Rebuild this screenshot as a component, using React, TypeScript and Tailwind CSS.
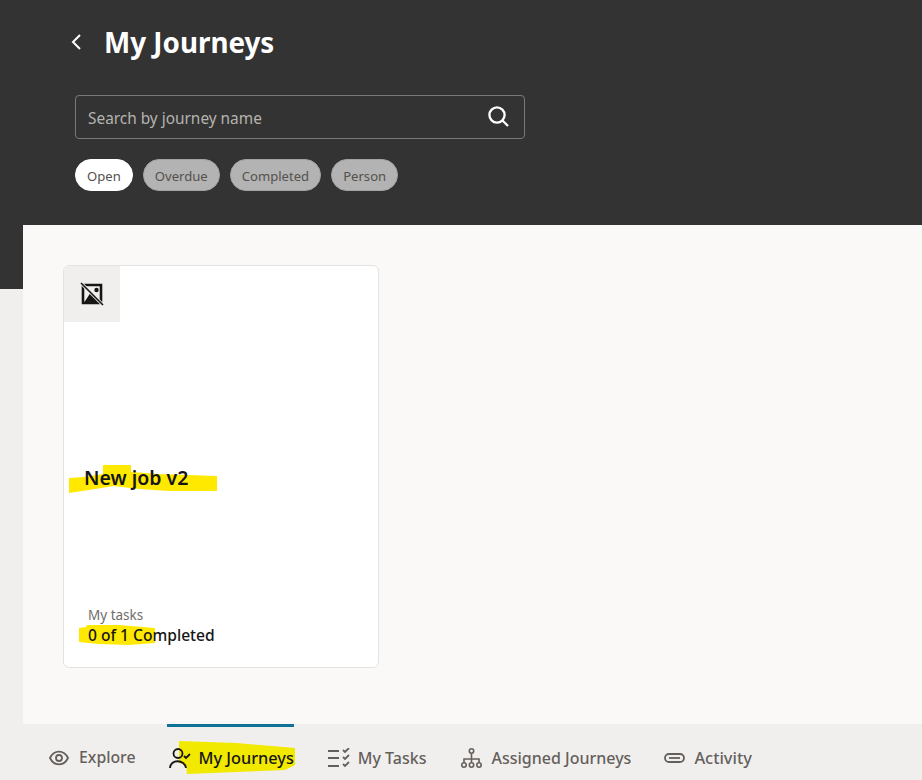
const font = { fontFamily: '"Noto Sans", "Open Sans", sans-serif' };

const filters = ['Open', 'Overdue', 'Completed', 'Person'];

function NoImageIcon() {
  return (
    <svg width="24" height="24" viewBox="0 0 24 24" fill="none">
      <path d="M3 3h18v18H3z" stroke="#161513" strokeWidth="2.6" />
      <path d="M4.5 20l6.5-10 7 10z" fill="#161513" />
      <circle cx="16.5" cy="8" r="2.2" fill="#161513" />
      <path d="M1 1l22 22" stroke="#f1efed" strokeWidth="3.2" />
      <path d="M1 1l22 22" stroke="#161513" strokeWidth="1.6" />
    </svg>
  );
}

function Scribble({ className, points, fill = '#ffe900' }: { className: string; points: string; fill?: string }) {
  return (
    <svg className={className} fill={fill}>
      <polygon points={points} />
    </svg>
  );
}

export default function App() {
  return (
    <div className="w-[922px] h-[780px] overflow-hidden bg-[#f1efed] flex flex-col relative" style={font}>
      {/* Dark header */}
      <div className="h-[289px] shrink-0 bg-[#333333] pl-[75px]">
        <div className="flex items-center h-[84px]">
          <svg width="14" height="18" viewBox="0 0 14 18" fill="none" className="-ml-[5px] mr-[20px]">
            <path d="M10 2L3 9l7 7" stroke="#fff" strokeWidth="2" />
          </svg>
          <h1 className="text-[27.8px] font-bold text-white leading-none mt-[1px]">My Journeys</h1>
        </div>
        <div className="mt-[11px] w-[450px] h-[44px] rounded-[4px] border border-[#7b7975] flex items-center justify-between pl-[12px] pr-[15px]">
          <span className="text-[15.4px] text-[#b5b3b0] mt-[3px]">Search by journey name</span>
          <svg width="22" height="22" viewBox="0 0 22 22" fill="none" className="-mt-[2px]">
            <circle cx="10" cy="10" r="7.6" stroke="#fff" strokeWidth="2.3" />
            <path d="M15.5 15.5L21 21" stroke="#fff" strokeWidth="2.3" />
          </svg>
        </div>
        <div className="mt-[20px] flex gap-[10px]">
          {filters.map((f, i) => (
            <span
              key={f}
              className={`h-[32px] px-[11px] pt-[3px] rounded-full border flex items-center text-[13.1px] text-[#55514d] ${
                i === 0 ? 'bg-white border-white' : 'bg-[#b3b3b3] border-[#a3a3a3]'
              }`}
            >
              {f}
            </span>
          ))}
        </div>
      </div>

      {/* Content panel */}
      <div className="ml-[23px] -mt-[64px] h-[499px] shrink-0 bg-[#faf9f8] pl-[40px] pt-[40px] z-10">
        <div className="w-[316px] h-[403px] bg-white border border-[#e5e3e0] rounded-[6px] overflow-hidden flex flex-col relative">
          <div className="w-[56px] h-[56px] bg-[#f1efed] flex items-center justify-center">
            <NoImageIcon />
          </div>
          <Scribble
            className="absolute left-[5px] top-[198px] w-[150px] h-[30px]"
            points="0,14 15,13 34,10 34,1 62,1 62,8 90,10 148,12 148,27 100,27 70,25 45,22 20,26 0,29"
          />
          <Scribble
            className="absolute left-[15px] top-[358px] w-[78px] h-[24px]"
            points="0,4 7,3 8,1 40,1 76,4 76,19 50,21 20,20 0,18"
          />
          <p className="absolute left-[20px] top-[197px] text-[19.5px] font-semibold leading-[30px] text-[#161513]">New job v2</p>
          <div className="absolute left-[24px] top-[339px]">
            <p className="text-[13.5px] leading-[20px] text-[#6f6c69]">My tasks</p>
            <p className="text-[15.6px] font-medium leading-[20px] text-[#161513]">0 of 1 Completed</p>
          </div>
        </div>
      </div>

      {/* Bottom nav */}
      <nav className="flex-1 flex pl-[49px] text-[16px] font-medium text-[#655f5c] relative">
        <div className="flex items-center gap-[10px] pt-[12px] mr-[31px]">
          <svg width="20" height="16" viewBox="0 0 20 16" fill="none">
            <path d="M1 8c4-8.5 14-8.5 18 0-4 8.5-14 8.5-18 0z" stroke="#655f5c" strokeWidth="1.8" />
            <circle cx="10" cy="8" r="3" stroke="#655f5c" strokeWidth="1.8" />
          </svg>
          <span className="text-[15.8px]">Explore</span>
        </div>
        <div className="relative flex items-center gap-[8px] pt-[12px] px-[2px] mr-[32px] text-[#161513]">
          <div className="absolute left-0 top-0 w-[127px] h-[3px] bg-[#0e7397]" />
          <Scribble
            className="absolute left-[10px] top-[17px] w-[120px] h-[34px]"
            points="2,0 60,2 118,7 118,24 108,29 60,31 10,33 9,24 2,22"
            fill="#f2e900"
          />
          <svg width="22" height="22" viewBox="0 0 22 22" fill="none" className="relative">
            <circle cx="9" cy="6.5" r="4.5" stroke="#161513" strokeWidth="1.8" />
            <path d="M1 21c0-9 15-9 16 0" stroke="#161513" strokeWidth="1.8" />
            <path d="M15 9l2 2 4-4" stroke="#161513" strokeWidth="1.8" />
          </svg>
          <span className="relative text-[16.3px]">My Journeys</span>
        </div>
        <div className="flex items-center gap-[8px] pt-[12px] mr-[35px]">
          <svg width="22" height="20" viewBox="0 0 22 20" fill="none" stroke="#655f5c" strokeWidth="1.8">
            <path d="M0 3h11M0 10h11M0 18h11" />
            <path d="M15 2l2 2 4-4M15 9l2 2 4-4M15 16l2 2 4-4" />
          </svg>
          <span>My Tasks</span>
        </div>
        <div className="flex items-center gap-[9px] pt-[12px] mr-[33px]">
          <svg width="21" height="20" viewBox="0 0 21 20" fill="none" stroke="#655f5c" strokeWidth="1.6">
            <circle cx="10.5" cy="3" r="2.2" />
            <circle cx="3" cy="17" r="2.2" />
            <circle cx="10.5" cy="17" r="2.2" />
            <circle cx="18" cy="17" r="2.2" />
            <path d="M10.5 5v10M3 15v-4h15v4" />
          </svg>
          <span>Assigned Journeys</span>
        </div>
        <div className="flex items-center gap-[9px] pt-[12px]">
          <svg width="21" height="10" viewBox="0 0 21 10" fill="none" stroke="#655f5c" strokeWidth="1.8">
            <rect x="1" y="1" width="19" height="8" rx="4" />
            <path d="M5 5h11" />
          </svg>
          <span className="text-[16.4px]">Activity</span>
        </div>
      </nav>
    </div>
  );
}
